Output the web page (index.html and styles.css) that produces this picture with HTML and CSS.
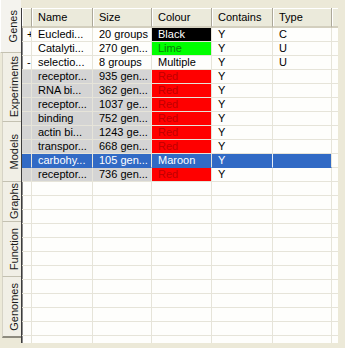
FILE: index.html
```html
<!DOCTYPE html>
<html lang="en">
<head>
    <meta charset="UTF-8">
    <meta name="viewport" content="width=device-width, initial-scale=1.0">
    <title>Genes</title>
    <link rel="stylesheet" href="styles.css">
</head>
<body>
    <div class="window">
        <div class="tabs">
            <div class="tab tab-genes active"><span>Genes</span></div>
            <div class="tab tab-experiments"><span>Experiments</span></div>
            <div class="tab tab-models"><span>Models</span></div>
            <div class="tab tab-graphs"><span>Graphs</span></div>
            <div class="tab tab-function"><span>Function</span></div>
            <div class="tab tab-genomes"><span>Genomes</span></div>
        </div>

        <div class="grid">
            <div class="row head">
                <div class="cell"></div>
                <div class="cell">Name</div>
                <div class="cell">Size</div>
                <div class="cell">Colour</div>
                <div class="cell">Contains</div>
                <div class="cell">Type</div>
                <div class="cell fill"></div>
            </div>

            <div class="row">
                <div class="cell ind">+</div>
                <div class="cell">Eucledi...</div>
                <div class="cell">20 groups</div>
                <div class="cell c-black">Black</div>
                <div class="cell">Y</div>
                <div class="cell">C</div>
                <div class="cell fill"></div>
            </div>
            <div class="row">
                <div class="cell ind"></div>
                <div class="cell">Catalyti...</div>
                <div class="cell">270 gen...</div>
                <div class="cell c-lime">Lime</div>
                <div class="cell">Y</div>
                <div class="cell">U</div>
                <div class="cell fill"></div>
            </div>
            <div class="row">
                <div class="cell ind">-</div>
                <div class="cell">selectio...</div>
                <div class="cell">8 groups</div>
                <div class="cell">Multiple</div>
                <div class="cell">Y</div>
                <div class="cell">U</div>
                <div class="cell fill"></div>
            </div>
            <div class="row grey">
                <div class="cell ind"></div>
                <div class="cell">receptor...</div>
                <div class="cell">935 gen...</div>
                <div class="cell c-red">Red</div>
                <div class="cell">Y</div>
                <div class="cell"></div>
                <div class="cell fill"></div>
            </div>
            <div class="row grey">
                <div class="cell ind"></div>
                <div class="cell">RNA bi...</div>
                <div class="cell">362 gen...</div>
                <div class="cell c-red">Red</div>
                <div class="cell">Y</div>
                <div class="cell"></div>
                <div class="cell fill"></div>
            </div>
            <div class="row grey">
                <div class="cell ind"></div>
                <div class="cell">receptor...</div>
                <div class="cell">1037 ge...</div>
                <div class="cell c-red">Red</div>
                <div class="cell">Y</div>
                <div class="cell"></div>
                <div class="cell fill"></div>
            </div>
            <div class="row grey">
                <div class="cell ind"></div>
                <div class="cell">binding</div>
                <div class="cell">752 gen...</div>
                <div class="cell c-red">Red</div>
                <div class="cell">Y</div>
                <div class="cell"></div>
                <div class="cell fill"></div>
            </div>
            <div class="row grey">
                <div class="cell ind"></div>
                <div class="cell">actin bi...</div>
                <div class="cell">1243 ge...</div>
                <div class="cell c-red">Red</div>
                <div class="cell">Y</div>
                <div class="cell"></div>
                <div class="cell fill"></div>
            </div>
            <div class="row grey">
                <div class="cell ind"></div>
                <div class="cell">transpor...</div>
                <div class="cell">668 gen...</div>
                <div class="cell c-red">Red</div>
                <div class="cell">Y</div>
                <div class="cell"></div>
                <div class="cell fill"></div>
            </div>
            <div class="row selected">
                <div class="cell ind"></div>
                <div class="cell">carbohy...</div>
                <div class="cell">105 gen...</div>
                <div class="cell">Maroon</div>
                <div class="cell">Y</div>
                <div class="cell"></div>
                <div class="cell fill"></div>
            </div>
            <div class="row grey">
                <div class="cell ind"></div>
                <div class="cell">receptor...</div>
                <div class="cell">736 gen...</div>
                <div class="cell c-red">Red</div>
                <div class="cell">Y</div>
                <div class="cell"></div>
                <div class="cell fill"></div>
            </div>

            <!-- empty rows -->
            <div class="row empty"><div class="cell"></div><div class="cell"></div><div class="cell"></div><div class="cell"></div><div class="cell"></div><div class="cell"></div><div class="cell fill"></div></div>
            <div class="row empty"><div class="cell"></div><div class="cell"></div><div class="cell"></div><div class="cell"></div><div class="cell"></div><div class="cell"></div><div class="cell fill"></div></div>
            <div class="row empty"><div class="cell"></div><div class="cell"></div><div class="cell"></div><div class="cell"></div><div class="cell"></div><div class="cell"></div><div class="cell fill"></div></div>
            <div class="row empty"><div class="cell"></div><div class="cell"></div><div class="cell"></div><div class="cell"></div><div class="cell"></div><div class="cell"></div><div class="cell fill"></div></div>
            <div class="row empty"><div class="cell"></div><div class="cell"></div><div class="cell"></div><div class="cell"></div><div class="cell"></div><div class="cell"></div><div class="cell fill"></div></div>
            <div class="row empty"><div class="cell"></div><div class="cell"></div><div class="cell"></div><div class="cell"></div><div class="cell"></div><div class="cell"></div><div class="cell fill"></div></div>
            <div class="row empty"><div class="cell"></div><div class="cell"></div><div class="cell"></div><div class="cell"></div><div class="cell"></div><div class="cell"></div><div class="cell fill"></div></div>
            <div class="row empty"><div class="cell"></div><div class="cell"></div><div class="cell"></div><div class="cell"></div><div class="cell"></div><div class="cell"></div><div class="cell fill"></div></div>
            <div class="row empty"><div class="cell"></div><div class="cell"></div><div class="cell"></div><div class="cell"></div><div class="cell"></div><div class="cell"></div><div class="cell fill"></div></div>
            <div class="row empty"><div class="cell"></div><div class="cell"></div><div class="cell"></div><div class="cell"></div><div class="cell"></div><div class="cell"></div><div class="cell fill"></div></div>
            <div class="row empty"><div class="cell"></div><div class="cell"></div><div class="cell"></div><div class="cell"></div><div class="cell"></div><div class="cell"></div><div class="cell fill"></div></div>
            <div class="row empty"><div class="cell"></div><div class="cell"></div><div class="cell"></div><div class="cell"></div><div class="cell"></div><div class="cell"></div><div class="cell fill"></div></div>
            <div class="row empty"><div class="cell"></div><div class="cell"></div><div class="cell"></div><div class="cell"></div><div class="cell"></div><div class="cell"></div><div class="cell fill"></div></div>
        </div>
    </div>
</body>
</html>
```

FILE: styles.css
```css
body {
    margin: 0;
    padding: 0;
    background-color: #ece9d8;
    font-family: "Liberation Sans", Arial, sans-serif;
    font-size: 11px;
    color: #000;
}
.window {
    display: flex;
    width: 345px;
    height: 348px;
    overflow: hidden;
}

/* vertical tabs on the left */
.tabs {
    width: 21px;
    display: flex;
    flex-direction: column;
}
.tab {
    margin-left: 2px;
    padding-left: 3px;
    border-left: 1px solid #d6d3c6;
    border-bottom: 1px solid #c4c1b1;
    background: #f1efe6;
    display: flex;
    align-items: center;
    justify-content: center;
    color: #1a1a1a;
}
.tab span {
    writing-mode: vertical-rl;
    transform: rotate(180deg);
    white-space: nowrap;
}
.tab.active {
    margin-left: 0;
    padding-left: 4px;
    border-left: 1px solid #fff;
    background: #f4f3ee;
}
.tab-genes { height: 52px; }
.tab-experiments { height: 68px; }
.tab-models { height: 59px; }
.tab-graphs { height: 39px; }
.tab-function { height: 54px; }
.tab-genomes {
    height: 59px;
    border-bottom: 2px solid #8e8b7e;
}

/* data grid */
.grid {
    flex: 1;
    margin: 8px 7px 5px 0;
    border-left: 1px solid #3c3c3c;
    box-shadow: inset 1px 0 #8a8a8a;
    background: #fefefc;
    overflow: hidden;
}
.row {
    display: grid;
    grid-template-columns: 10px 61px 59px 60px 61px 59px 1fr;
    height: 14px;
}
.cell {
    box-sizing: border-box;
    border-right: 1px solid #e6e4d9;
    border-bottom: 1px solid #e6e4d9;
    padding-left: 6px;
    line-height: 13px;
    white-space: nowrap;
    overflow: hidden;
}
.cell.ind {
    padding-left: 5px;
}
.cell.fill {
    border-right: none;
}

.row.head {
    height: 20px;
}
.head .cell {
    line-height: 18px;
    background: #ebeadb;
    border-right: 1px solid #aca899;
    border-bottom: 2px solid #d3cfbe;
    box-shadow: inset 1px 1px #fff;
}
.head .cell.fill {
    border-right: 1px solid #c9c6b6;
}

.row.grey .cell:nth-child(-n+3) {
    background: #d4d4d4;
}
.row.selected .cell {
    background: #316ac5;
    color: #fff;
    border-bottom-color: #316ac5;
}
.row.selected .cell:nth-child(5) {
    border-right-color: #e8eef8;
}
.row.selected .cell.fill {
    background: #fefefc;
    border-bottom-color: #e6e4d9;
}

.c-black {
    background: #000;
    color: #fff;
}
.c-lime {
    background: #00ff00;
    color: #0a7a0a;
}
.c-red {
    background: #ff0000;
    color: #c00000;
}
```
